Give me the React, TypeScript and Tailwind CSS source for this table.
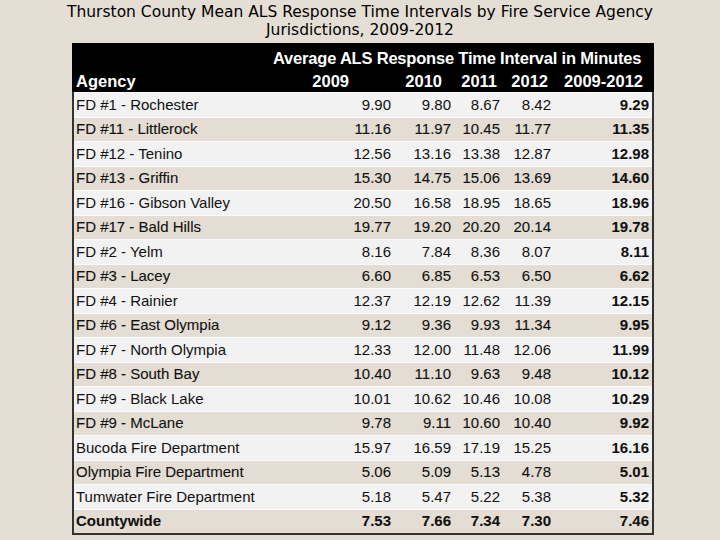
import React from "react";

type Row = { name: string; v: [string, string, string, string, string] };

const rows: Row[] = [
  { name: "FD #1 - Rochester", v: ["9.90", "9.80", "8.67", "8.42", "9.29"] },
  { name: "FD #11 - Littlerock", v: ["11.16", "11.97", "10.45", "11.77", "11.35"] },
  { name: "FD #12 - Tenino", v: ["12.56", "13.16", "13.38", "12.87", "12.98"] },
  { name: "FD #13 - Griffin", v: ["15.30", "14.75", "15.06", "13.69", "14.60"] },
  { name: "FD #16 - Gibson Valley", v: ["20.50", "16.58", "18.95", "18.65", "18.96"] },
  { name: "FD #17 - Bald Hills", v: ["19.77", "19.20", "20.20", "20.14", "19.78"] },
  { name: "FD #2 - Yelm", v: ["8.16", "7.84", "8.36", "8.07", "8.11"] },
  { name: "FD #3 - Lacey", v: ["6.60", "6.85", "6.53", "6.50", "6.62"] },
  { name: "FD #4 - Rainier", v: ["12.37", "12.19", "12.62", "11.39", "12.15"] },
  { name: "FD #6 - East Olympia", v: ["9.12", "9.36", "9.93", "11.34", "9.95"] },
  { name: "FD #7 - North Olympia", v: ["12.33", "12.00", "11.48", "12.06", "11.99"] },
  { name: "FD #8 - South Bay", v: ["10.40", "11.10", "9.63", "9.48", "10.12"] },
  { name: "FD #9 - Black Lake", v: ["10.01", "10.62", "10.46", "10.08", "10.29"] },
  { name: "FD #9 - McLane", v: ["9.78", "9.11", "10.60", "10.40", "9.92"] },
  { name: "Bucoda Fire Department", v: ["15.97", "16.59", "17.19", "15.25", "16.16"] },
  { name: "Olympia Fire Department", v: ["5.06", "5.09", "5.13", "4.78", "5.01"] },
  { name: "Tumwater Fire Department", v: ["5.18", "5.47", "5.22", "5.38", "5.32"] },
  { name: "Countywide", v: ["7.53", "7.66", "7.34", "7.30", "7.46"] },
];

export default function App() {
  return (
    <div className="w-[720px] h-[540px] bg-[#e4ded4] overflow-hidden flex flex-col items-center">
      <div
        className="mt-[3px] text-center text-[15.5px] leading-[18px] text-black"
        style={{ fontFamily: '"DejaVu Sans", Verdana, sans-serif' }}
      >
        <div>Thurston County Mean ALS Response Time Intervals by Fire Service Agency</div>
        <div>Jurisdictions, 2009-2012</div>
      </div>
      <div
        className="mt-[4px] w-[582px] border-x-2 border-b-2 border-[#333333] ml-[6px]"
        style={{ fontFamily: '"Liberation Sans", Arial, sans-serif' }}
      >
        <div className="bg-black text-white font-bold text-[16.5px] h-[49px] -mx-[2px] px-[2px] flex flex-col">
          <div className="h-[25px] flex items-end">
            <div className="w-[199px]" />
            <div className="tracking-[-0.2px] leading-[20px]">Average ALS Response Time Interval in Minutes</div>
          </div>
          <div className="h-[24px] flex items-end pb-[1px] leading-[20px]">
            <div className="w-[226px] pl-[2px]">Agency</div>
            <div className="w-[49px] text-right">2009</div>
            <div className="w-[93px] text-right">2010</div>
            <div className="w-[55px] text-right">2011</div>
            <div className="w-[51px] text-right">2012</div>
            <div className="w-[95px] text-right">2009-2012</div>
          </div>
        </div>
        {rows.map((r, i) => {
          const tan = i % 2 === 1;
          const last = i === rows.length - 1;
          return (
            <div
              key={i}
              className={
                "h-[24.5px] flex items-center text-[15px] text-[#111111] border-t border-[#fafafa] " +
                (tan ? "bg-[#e3ddd3] [-webkit-text-stroke:0.1px_#111111] " : "bg-[#f2f2f2] ") +
                (last ? "font-bold" : "")
              }
            >
              <div className="w-[243px] pl-[2px] whitespace-nowrap">{r.name}</div>
              <div className="w-[74px] text-right">{r.v[0]}</div>
              <div className="w-[60px] text-right">{r.v[1]}</div>
              <div className="w-[49px] text-right">{r.v[2]}</div>
              <div className="w-[51px] text-right">{r.v[3]}</div>
              <div className="w-[98px] text-right font-bold">{r.v[4]}</div>
            </div>
          );
        })}
      </div>
    </div>
  );
}
